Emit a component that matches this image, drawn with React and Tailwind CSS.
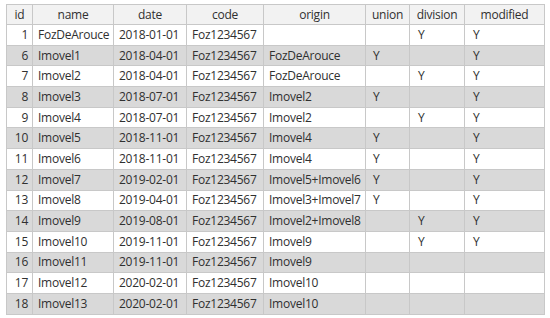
const colunas = [
  { key: "id", label: "id", w: "w-[26px]" },
  { key: "name", label: "name", w: "w-[81px]" },
  { key: "date", label: "date", w: "w-[73px]" },
  { key: "code", label: "code", w: "w-[77px]" },
  { key: "origin", label: "origin", w: "w-[102px]" },
  { key: "union", label: "union", w: "w-[44px]" },
  { key: "division", label: "division", w: "w-[55px]" },
  { key: "modified", label: "modified", w: "w-[80px]" },
];

const linhas = [
  [1, "FozDeArouce", "2018-01-01", "", "", "Y", "Y"],
  [6, "Imovel1", "2018-04-01", "FozDeArouce", "Y", "", "Y"],
  [7, "Imovel2", "2018-04-01", "FozDeArouce", "", "Y", "Y"],
  [8, "Imovel3", "2018-07-01", "Imovel2", "Y", "", "Y"],
  [9, "Imovel4", "2018-07-01", "Imovel2", "", "Y", "Y"],
  [10, "Imovel5", "2018-11-01", "Imovel4", "Y", "", "Y"],
  [11, "Imovel6", "2018-11-01", "Imovel4", "Y", "", "Y"],
  [12, "Imovel7", "2019-02-01", "Imovel5+Imovel6", "Y", "", "Y"],
  [13, "Imovel8", "2019-04-01", "Imovel3+Imovel7", "Y", "", "Y"],
  [14, "Imovel9", "2019-08-01", "Imovel2+Imovel8", "", "Y", "Y"],
  [15, "Imovel10", "2019-11-01", "Imovel9", "", "Y", "Y"],
  [16, "Imovel11", "2019-11-01", "Imovel9", "", "", ""],
  [17, "Imovel12", "2020-02-01", "Imovel10", "", "", ""],
  [18, "Imovel13", "2020-02-01", "Imovel10", "", "", ""],
];

export default function App() {
  return (
    <div className="w-[550px] h-[318px] bg-white pl-[6px] pt-[4px] font-['Open_Sans',sans-serif] text-[12px] tracking-[-0.25px] text-[#303030] whitespace-nowrap">
      <table className="border-collapse table-fixed w-[539px] border border-[#b8b8b8]">
        <thead>
          <tr className="h-[20px] bg-[#f2f2f2]">
            {colunas.map(c => (
              <th
                key={c.key}
                className={`${c.w} border border-[#c8c8c8] font-normal text-center p-0 leading-none`}
              >
                {c.label}
              </th>
            ))}
          </tr>
        </thead>
        <tbody>
          {linhas.map((l, i) => (
            <tr
              key={l[0]}
              className={`h-[20.7px] ${i % 2 === 1 ? "bg-[#d9d9d9]" : "bg-white"}`}
            >
              <td className="border border-[#c8c8c8] text-right pr-[4px] p-0 leading-none">{l[0]}</td>
              <td className="border border-[#c8c8c8] pl-[5px] leading-none">{l[1]}</td>
              <td className="border border-[#c8c8c8] pl-[5px] leading-none">{l[2]}</td>
              <td className="border border-[#c8c8c8] pl-[5px] leading-none">Foz1234567</td>
              <td className="border border-[#c8c8c8] pl-[5px] leading-none">{l[3]}</td>
              <td className="border border-[#c8c8c8] pl-[7px] leading-none">{l[4]}</td>
              <td className="border border-[#c8c8c8] pl-[8px] leading-none">{l[5]}</td>
              <td className="border border-[#c8c8c8] pl-[8px] leading-none">{l[6]}</td>
            </tr>
          ))}
        </tbody>
      </table>
    </div>
  );
}
